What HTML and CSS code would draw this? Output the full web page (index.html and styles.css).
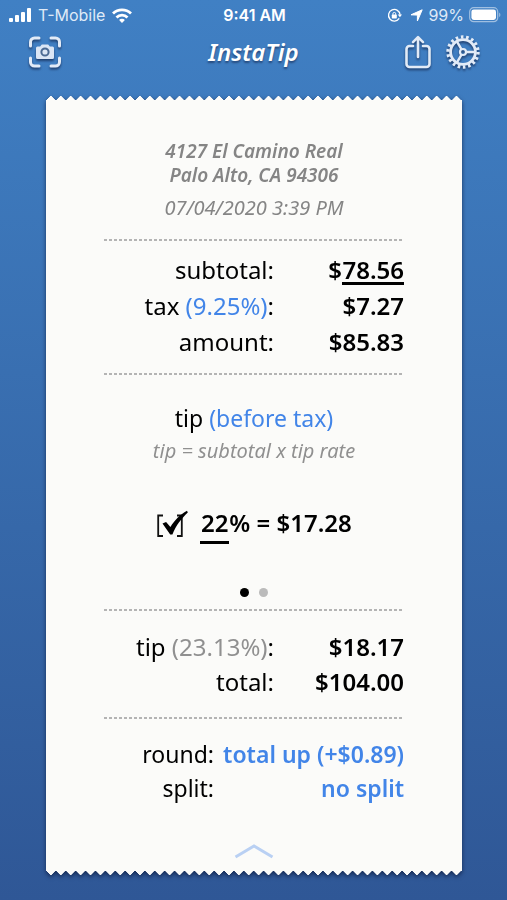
FILE: index.html
```html
<!DOCTYPE html>
<html lang="en">
<head>
    <meta charset="UTF-8">
    <meta name="viewport" content="width=device-width, initial-scale=1.0">
    <title>InstaTip</title>
    <link rel="stylesheet" href="styles.css">
</head>
<body>
    <div class="status-bar">
        <div class="status-left">
            <svg width="23" height="15" viewBox="0 0 23 15" fill="#fff">
                <rect x="1" y="10" width="4" height="4" rx="1"/>
                <rect x="7" y="7" width="4" height="7" rx="1"/>
                <rect x="13" y="4" width="4" height="10" rx="1"/>
                <rect x="19" y="0" width="4" height="14" rx="1"/>
            </svg>
            <span>T-Mobile</span>
            <svg width="20" height="15" viewBox="0 0 20 15" fill="none" stroke="#fff" stroke-width="2.8">
                <path d="M1 5.600a12.800 12.800 0 0 1 18 0"/>
                <path d="M4.500 9.400a7.800 7.800 0 0 1 11 0"/>
                <path d="M10 15l-2.900-3a3.900 3.900 0 0 1 5.800 0z" fill="#fff" stroke="none"/>
            </svg>
        </div>
        <span class="clock">9:41 AM</span>
        <div class="status-right">
            <svg class="lock" width="15" height="15" viewBox="0 0 15 15" fill="none" stroke="#fff" stroke-width="1.300">
                <path d="M12.200 10.400a5.800 5.800 0 1 1 .9-3.600"/>
                <path d="M10.800 6.600h4.200l-2.100 2.700z" fill="#fff" stroke="none"/>
                <rect x="4.800" y="6.600" width="5" height="3.800" rx=".6" fill="#fff" stroke="none"/>
                <path d="M5.900 6.800v-1a1.400 1.400 0 0 1 2.800 0v1" stroke-width="1"/>
            </svg>
            <svg width="13" height="13" viewBox="0 0 13 13" fill="#fff" stroke="#fff" stroke-linejoin="round">
                <path d="M12.200.8L7.400 12V6.100L1 5.800z"/>
            </svg>
            <span>99%</span>
            <svg width="32" height="16" viewBox="0 0 32 16">
                <rect x=".7" y=".7" width="28" height="14" rx="4" fill="none" stroke="#fff" stroke-opacity=".5" stroke-width="1.200"/>
                <rect x="2.400" y="2.400" width="24.600" height="10.600" rx="2.400" fill="#fff"/>
                <path d="M30.200 5.400v4.600c1.600-.8 1.600-3.800 0-4.600z" fill="#fff" fill-opacity=".5"/>
            </svg>
        </div>
    </div>

    <header class="navbar">
        <div class="nav-left">
            <button class="icon-button" aria-label="Scan receipt">
                <svg width="34" height="34" viewBox="0 0 34 34" fill="none">
                    <g stroke="#e2ebf7" stroke-width="3" stroke-linecap="round">
                        <path d="M3.500 11V7a4 4 0 0 1 4-4H12"/>
                        <path d="M24 3h4.500a4 4 0 0 1 4 4v4"/>
                        <path d="M32.500 23v4a4 4 0 0 1-4 4H24"/>
                        <path d="M12 31H7.500a4 4 0 0 1-4-4v-4"/>
                    </g>
                    <path d="M10.500 11.500h2.600l1.700-2h6.400l1.700 2h2.600a1.500 1.500 0 0 1 1.500 1.500v9.500a1.500 1.500 0 0 1-1.500 1.500h-15a1.500 1.500 0 0 1-1.500-1.500V13a1.500 1.500 0 0 1 1.500-1.500z" fill="#dbe6f5"/>
                    <circle cx="18" cy="17" r="3.600" stroke="#4b6a93" stroke-width="2"/>
                </svg>
            </button>
        </div>
        <h1 class="title">InstaTip</h1>
        <div class="nav-right">
            <button class="icon-button" aria-label="Share">
                <svg width="28" height="34" viewBox="0 0 28 34" fill="none" stroke="#e2ebf7" stroke-width="2.600" stroke-linejoin="round" stroke-linecap="round">
                    <path d="M9 11H5.500a3 3 0 0 0-3 3V29a3 3 0 0 0 3 3h17a3 3 0 0 0 3-3V14a3 3 0 0 0-3-3H19"/>
                    <path d="M14 22V2.500M9 7.200L14 2.200l5 5"/>
                </svg>
            </button>
            <button class="icon-button" aria-label="Settings">
                <svg width="34" height="34" viewBox="0 0 34 34" fill="none" stroke="#e2ebf7">
                    <circle cx="17" cy="17" r="15" stroke-width="3.400" stroke-dasharray="2.600 2.636"/>
                    <circle cx="17" cy="17" r="12.400" stroke-width="2.800"/>
                    <circle cx="17" cy="17" r="3" stroke-width="2.200"/>
                    <path d="M20 17h9M15.500 14.400L11 6.600M15.500 19.600L11 27.400" stroke-width="2.400"/>
                </svg>
            </button>
        </div>
    </header>

    <main class="receipt">
        <div class="teeth teeth-top"></div>
        <div class="paper">
            <address class="address">4127 El Camino Real<br>Palo Alto, CA 94306</address>
            <time class="date" datetime="2020-07-04T15:39">07/04/2020 3:39 PM</time>

            <hr class="divider">

            <section class="amounts">
                <div class="row">
                    <label for="subtotal">subtotal:</label>
                    <span class="value">$<input class="field" type="text" id="subtotal" value="78.56" inputmode="decimal"></span>
                </div>
                <div class="row">
                    <span>tax <button class="link">(9.25%)</button>:</span>
                    <span class="value">$7.27</span>
                </div>
                <div class="row">
                    <span>amount:</span>
                    <span class="value">$85.83</span>
                </div>
            </section>

            <hr class="divider">

            <section class="tip">
                <h2 class="tip-title">tip <button class="link">(before tax)</button></h2>
                <p class="formula">tip = subtotal x tip rate</p>
                <div class="tip-line">
                    <label class="check">
                        <input type="checkbox" checked aria-label="Use this tip">
                        <svg width="32" height="28" viewBox="0 0 32 28" fill="none">
                            <path d="M7 5.500H2.200v20.500H7M21 5.500h4.800v20.500H21" stroke="#111" stroke-width="1.800"/>
                            <path d="M6.500 13.500l3.600-1.600 4.300 5.200C18.500 10.500 24 4.500 31 .8l.8 1.600C25.500 8.500 20 15 16.400 24.500h-2.200z" fill="#000"/>
                        </svg>
                    </label>
                    <span><input class="field rate" type="text" value="22" aria-label="Tip rate" inputmode="numeric">% = $17.28</span>
                </div>
                <div class="dots">
                    <span class="dot active"></span>
                    <span class="dot"></span>
                </div>
            </section>

            <hr class="divider">

            <section class="totals">
                <div class="row">
                    <span>tip <span class="muted">(23.13%)</span>:</span>
                    <span class="value">$18.17</span>
                </div>
                <div class="row">
                    <span>total:</span>
                    <span class="value">$104.00</span>
                </div>
            </section>

            <hr class="divider">

            <section class="options">
                <div class="row">
                    <span>round:</span>
                    <button class="link value">total up (+$0.89)</button>
                </div>
                <div class="row">
                    <span>split:</span>
                    <button class="link value">no split</button>
                </div>
            </section>

            <button class="expand" aria-label="Show more">
                <svg width="40" height="16" viewBox="0 0 40 16" fill="none" stroke="#b9d0f3" stroke-width="3">
                    <path d="M1.500 14L20 3l18.500 11"/>
                </svg>
            </button>
        </div>
        <div class="teeth teeth-bottom"></div>
    </main>
</body>
</html>
```
FILE: styles.css
```css
* {
    box-sizing: border-box;
}
body {
    margin: 0;
    min-height: 100vh;
    display: flex;
    flex-direction: column;
    background: linear-gradient(#4080c4, #2f5796);
    font-family: "Noto Sans", sans-serif;
    color: #000;
}
button, input {
    font: inherit;
    color: inherit;
    margin: 0;
    padding: 0;
    border: none;
    background: none;
}
button {
    cursor: pointer;
}

/* status bar */
.status-bar {
    display: grid;
    grid-template-columns: 1fr auto 1fr;
    align-items: center;
    height: 30px;
    padding: 0 6px 0 8px;
    color: #fff;
    font-family: Inter, sans-serif;
    font-size: 16px;
}
.status-left, .status-right {
    display: flex;
    align-items: center;
    gap: 7px;
    color: #dfeaf7;
}
.status-right {
    justify-content: flex-end;
    gap: 5px;
}
.lock {
    margin-right: 3px;
}
.clock {
    font-weight: 600;
}

/* nav bar */
.navbar {
    display: grid;
    grid-template-columns: 1fr auto 1fr;
    align-items: center;
    height: 44px;
    padding: 0 27px;
}
.nav-right {
    display: flex;
    justify-content: flex-end;
    gap: 14px;
}
.icon-button {
    display: flex;
    filter: drop-shadow(0 2px 1px rgba(20, 40, 80, 0.7));
}
.title {
    margin: 0;
    color: #fff;
    font-size: 24px;
    font-style: italic;
    font-weight: 600;
    line-height: 32px;
    text-shadow: 0 2px 2px rgba(20, 40, 80, 0.6);
}

/* receipt */
.receipt {
    flex: 1;
    display: flex;
    flex-direction: column;
    margin: 22px 45px 25px 46px;
    filter: drop-shadow(0 2px 2px rgba(16, 32, 70, 0.8));
}
.teeth {
    height: 5px;
    background-size: 10px 5px;
    background-repeat: round no-repeat;
}
.teeth-top {
    background-image: conic-gradient(from 135deg at 50% 0, #fbfbf9 90deg, transparent 0);
}
.teeth-bottom {
    background-image: conic-gradient(from -45deg at 50% 100%, #fbfbf9 90deg, transparent 0);
}
.paper {
    flex: 1;
    display: flex;
    flex-direction: column;
    padding: 38px 58px 11px;
    background: #fbfbf9;
    font-size: 24px;
    line-height: 36px;
}
.address, .date {
    color: #858585;
    font-size: 20px;
    font-style: italic;
    line-height: 24px;
    text-align: center;
}
.address {
    font-size: 19px;
    font-weight: 600;
}
.date {
    margin-top: 9px;
}
.divider {
    width: 100%;
    height: 2px;
    margin: 0;
    border: none;
    background: repeating-linear-gradient(to right, #b4b4b4 0 3px, transparent 3px 5px);
}
.date + .divider {
    margin-top: 19px;
}
.row {
    display: grid;
    grid-template-columns: 17fr 13fr;
    text-align: right;
    white-space: nowrap;
}
.value {
    font-weight: 600;
    text-align: right;
}
.link {
    color: #4285e8;
}
.muted {
    color: #909090;
}
.field {
    width: 62px;
    height: 28px;
    border-bottom: 3px solid #000;
    border-radius: 0;
    font-weight: 600;
    line-height: 24px;
    text-align: right;
}
.amounts {
    padding: 11px 0 13px;
}

/* tip */
.tip {
    padding: 25px 0 12px;
    text-align: center;
}
.tip-title {
    margin: 0;
    font-size: 23px;
    font-weight: 400;
}
.formula {
    margin: 0;
    color: #909090;
    font-size: 20px;
    font-style: italic;
    line-height: 30px;
}
.tip-line {
    display: flex;
    justify-content: center;
    align-items: center;
    gap: 12px;
    margin-top: 38px;
    font-weight: 600;
}
.check {
    position: relative;
    width: 32px;
    height: 28px;
}
.check input {
    display: block;
    appearance: none;
    width: 32px;
    height: 28px;
}
.check svg {
    position: absolute;
    top: 0;
    left: 0;
}
.check input:not(:checked) + svg path:last-child {
    display: none;
}
.rate {
    width: 29px;
    height: 40px;
    text-align: center;
}
.dots {
    display: flex;
    justify-content: center;
    gap: 10px;
    margin-top: 44px;
}
.dot {
    width: 9px;
    height: 9px;
    border-radius: 50%;
    background: #bbb;
}
.dot.active {
    background: #000;
}

/* totals */
.totals {
    padding: 18px 0;
    line-height: 35px;
}
.options {
    padding: 18px 0;
    font-size: 23px;
    line-height: 34px;
}
.options .row {
    grid-template-columns: 11fr 19fr;
}
.expand {
    display: flex;
    align-self: center;
    margin-top: auto;
}
```
